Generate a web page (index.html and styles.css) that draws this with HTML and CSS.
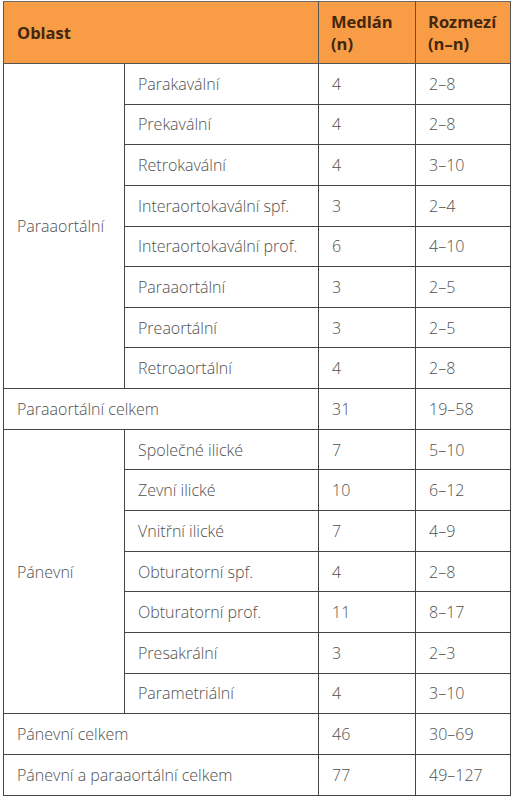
FILE: index.html
```html
<!DOCTYPE html>
<html lang="cs">
<head>
<meta charset="utf-8">
<link rel="stylesheet" href="styles.css">
</head>
<body>
<table class="tbl">
  <colgroup>
    <col class="c1"><col class="c2"><col class="c3"><col class="c4">
  </colgroup>
  <thead>
    <tr class="head">
      <th colspan="2">Oblast</th>
      <th>Medlán<br>(n)</th>
      <th>Rozmezí<br>(n–n)</th>
    </tr>
  </thead>
  <tbody>
    <tr><td rowspan="8">Paraaortální</td><td>Parakavální</td><td>4</td><td>2–8</td></tr>
    <tr><td>Prekavální</td><td>4</td><td>2–8</td></tr>
    <tr><td>Retrokavální</td><td>4</td><td>3–10</td></tr>
    <tr><td>Interaortokavální spf.</td><td>3</td><td>2–4</td></tr>
    <tr><td>Interaortokavální prof.</td><td>6</td><td>4–10</td></tr>
    <tr><td>Paraaortální</td><td>3</td><td>2–5</td></tr>
    <tr><td>Preaortální</td><td>3</td><td>2–5</td></tr>
    <tr><td>Retroaortální</td><td>4</td><td>2–8</td></tr>
    <tr><td colspan="2">Paraaortální celkem</td><td>31</td><td>19–58</td></tr>
    <tr><td rowspan="7">Pánevní</td><td>Společné ilické</td><td>7</td><td>5–10</td></tr>
    <tr><td>Zevní ilické</td><td>10</td><td>6–12</td></tr>
    <tr><td>Vnitřní ilické</td><td>7</td><td>4–9</td></tr>
    <tr><td>Obturatorní spf.</td><td>4</td><td>2–8</td></tr>
    <tr><td>Obturatorní prof.</td><td>11</td><td>8–17</td></tr>
    <tr><td>Presakrální</td><td>3</td><td>2–3</td></tr>
    <tr><td>Parametriální</td><td>4</td><td>3–10</td></tr>
    <tr><td colspan="2">Pánevní celkem</td><td>46</td><td>30–69</td></tr>
    <tr><td colspan="2">Pánevní a paraaortální celkem</td><td>77</td><td>49–127</td></tr>
  </tbody>
</table>
</body>
</html>
```
FILE: styles.css
```css
html, body {
  margin: 0;
  padding: 0;
  background: #ffffff;
}
body {
  padding: 1px 4px 0 3px;
  font-family: "Open Sans", "Liberation Sans", sans-serif;
}
.tbl {
  border-collapse: collapse;
  table-layout: fixed;
  width: 507px;
  border: 1px solid #555;
}
.c1 { width: 121px; }
.c2 { width: 194px; }
.c3 { width: 97px; }
.c4 { width: 95px; }
.head th {
  background: #f89d45;
  color: #45260e;
  font-weight: 700;
  font-size: 16.5px;
  line-height: 22px;
  text-align: left;
  padding: 0 12px;
  height: 61px;
  border: 1px solid #555;
  border-top: 1px solid #6a6a6a;
}
.head th:first-child {
  padding-left: 13px;
}
.tbl td {
  color: #505050;
  font-size: 16px;
  font-weight: 300;
  padding: 0 12px 0 13px;
  height: 39.65px;
  border: 1px solid #444;
  vertical-align: middle;
  white-space: nowrap;
}
```
